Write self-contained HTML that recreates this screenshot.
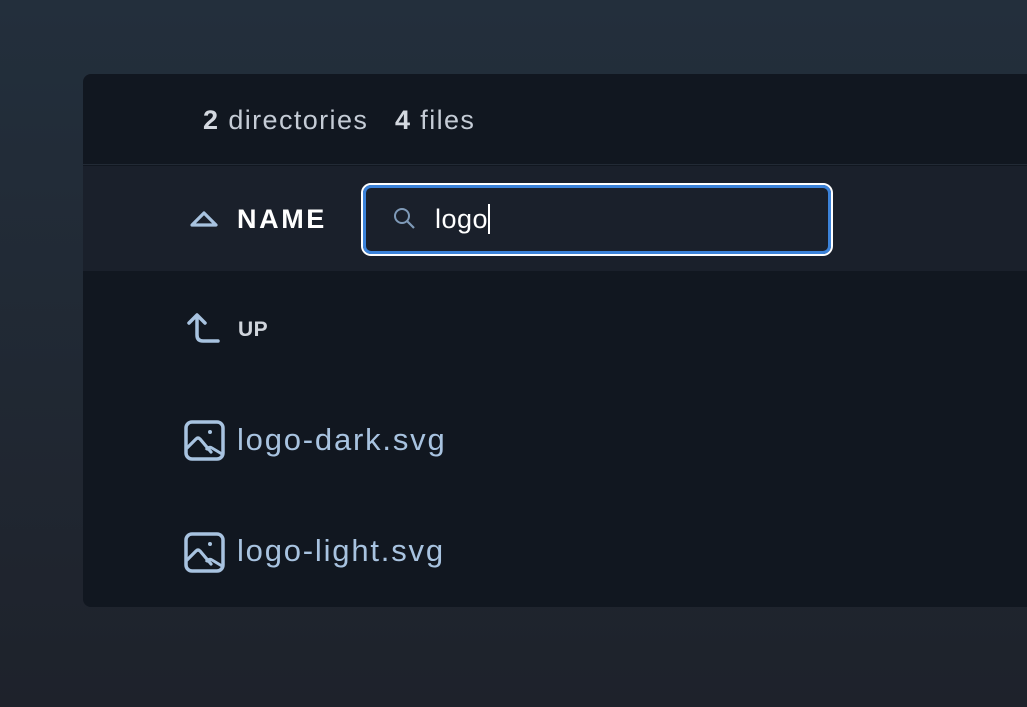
<!DOCTYPE html>
<html><head><style>
body{margin:0;width:1027px;height:707px;overflow:hidden;background:linear-gradient(#232f3c,#1e222b);font-family:"Liberation Sans",sans-serif;position:relative}
.panel{position:absolute;left:83px;top:74px;width:980px;height:533px;border-radius:8px;background:#111720;overflow:hidden}
.top{height:91px;border-bottom:1px solid #222a35;color:#c5ccd6;font-size:27px;letter-spacing:1.4px;line-height:92px;padding-left:120px;box-sizing:border-box}
.top b{color:#d4d9e0}
.hdr{position:absolute;top:92px;left:0;right:0;height:105px;background:#1a202b}
.name{position:absolute;left:154px;top:38px;color:#fff;font-weight:bold;font-size:27px;letter-spacing:2.6px}
.search{position:absolute;left:278px;top:17px;width:472px;height:73px;box-sizing:border-box;border:2px solid #fff;border-radius:10px}
.search .in{position:absolute;inset:0;border:3px solid #3b82d9;border-radius:8px;background:#1a202b}
.search span{position:absolute;left:72px;top:19px;color:#fff;font-size:27px;letter-spacing:0.5px}
.cur{display:inline-block;width:2px;height:30px;background:#fff;vertical-align:-6px}
.row{position:absolute;color:#a8c3e0;font-size:31px;letter-spacing:1.8px}
</style></head><body>
<div class="panel">
<div class="top"><b>2</b> directories &nbsp; <b>4</b> files</div>
<div class="hdr">
<svg style="position:absolute;left:105px;top:42px" width="32" height="22" viewBox="0 0 32 22"><path d="M4 17 L16 5 L28 17 Z" fill="none" stroke="#a8c3e0" stroke-width="3.2" stroke-linejoin="round"/></svg>
<div class="name">NAME</div>
<div class="search"><div class="in"></div>
<svg style="position:absolute;left:29px;top:21px" width="26" height="26" viewBox="0 0 26 26"><circle cx="10" cy="10" r="7" fill="none" stroke="#7f9ab8" stroke-width="2"/><path d="M15 15 L22 22" stroke="#7f9ab8" stroke-width="2.2"/></svg>
<span>logo<i class="cur"></i></span></div>
</div>
<svg style="position:absolute;left:103px;top:237px" width="34" height="34" viewBox="0 0 34 34"><path d="M11 5 V24 Q11 30 17 30 H32 M3 12 L11 4 L19 12" fill="none" stroke="#a8c3e0" stroke-width="3.5" stroke-linecap="round" stroke-linejoin="round"/></svg>
<div style="position:absolute;left:155px;top:244px;color:#d0d5dc;font-weight:bold;font-size:21px;letter-spacing:0.5px">UP</div>
<svg style="position:absolute;left:101px;top:346px" width="41" height="41" viewBox="0 0 41 41"><rect x="2" y="2" width="37" height="37" rx="6" fill="none" stroke="#a8c3e0" stroke-width="3.5"/><path d="M3 28 L12 19 Q14 17 16 19 L27 32" fill="none" stroke="#a8c3e0" stroke-width="3.2" stroke-linecap="round"/><path d="M22 30 Q25 26 28 28 L38 34" fill="none" stroke="#a8c3e0" stroke-width="3"/><circle cx="26" cy="12" r="2" fill="#a8c3e0"/></svg>
<div class="row" style="left:154px;top:348px">logo-dark.svg</div>
<svg style="position:absolute;left:101px;top:458px" width="41" height="41" viewBox="0 0 41 41"><rect x="2" y="2" width="37" height="37" rx="6" fill="none" stroke="#a8c3e0" stroke-width="3.5"/><path d="M3 28 L12 19 Q14 17 16 19 L27 32" fill="none" stroke="#a8c3e0" stroke-width="3.2" stroke-linecap="round"/><path d="M22 30 Q25 26 28 28 L38 34" fill="none" stroke="#a8c3e0" stroke-width="3"/><circle cx="26" cy="12" r="2" fill="#a8c3e0"/></svg>
<div class="row" style="left:154px;top:459px">logo-light.svg</div>
</div>
</body></html>
